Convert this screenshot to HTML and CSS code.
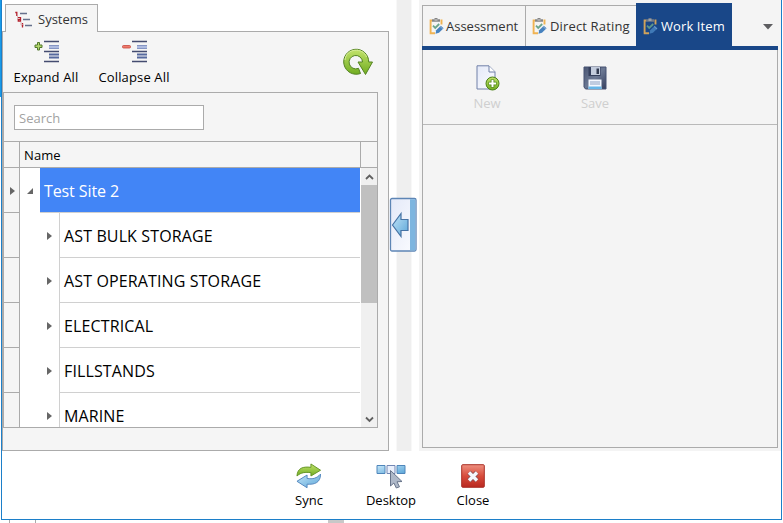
FILE: index.html
```
<!DOCTYPE html>
<html lang="en">
<head>
<meta charset="utf-8">
<title>Systems</title>
<link rel="stylesheet" href="styles.css">
</head>
<body>
<svg width="0" height="0" class="defs">
<defs>
<linearGradient id="green" x1="0" y1="0" x2="0" y2="1"><stop offset="0" stop-color="#c3e36c"/><stop offset="1" stop-color="#70ac20"/></linearGradient>
<linearGradient id="blue" x1="0" y1="0" x2="1" y2="1"><stop offset="0" stop-color="#c4e5f8"/><stop offset="1" stop-color="#5ba6d8"/></linearGradient>
<linearGradient id="red" x1="0" y1="0" x2="0" y2="1"><stop offset="0" stop-color="#ee9080"/><stop offset=".5" stop-color="#d84c3c"/><stop offset="1" stop-color="#b92820"/></linearGradient>
<linearGradient id="navy" x1="0" y1="0" x2="1" y2="1"><stop offset="0" stop-color="#4a5673"/><stop offset=".5" stop-color="#6b7893"/><stop offset="1" stop-color="#353e5c"/></linearGradient>
<linearGradient id="paper" x1="0" y1="0" x2="1" y2="1"><stop offset="0" stop-color="#e4e9f8"/><stop offset="1" stop-color="#fbfcff"/></linearGradient>
<symbol id="clip" viewBox="0 0 16 18"><path d="M3 3.500H1.600v12.700H6M11.500 3.500h1v4" fill="none" stroke="#f0b352" stroke-width="1.900"/><path d="M3 2.200h2.500V1h3v1.200H11v2.500H3z" fill="#858585"/><path d="M5.500 2.500h3v1h-3z" fill="#d8d8d8"/><path d="M4 8.700l2.200 2.200L10.200 7" fill="none" stroke="#6ba58b" stroke-width="1.800"/><path d="M7.200 13.200l4.600-4.500 2.800 2.600-4.600 4.500-3.500.9z" fill="#4682bf"/><path d="M11 9.400l3 2.800" stroke="#a6c4e0" stroke-width=".7"/></symbol>
<symbol id="list" viewBox="0 0 15 23"><path d="M0 1.500h15M0 11.500h15M0 21.500h15" stroke="#444c70" stroke-width="1.600"/><path d="M5 5h10v4H5z" fill="#aebbe0"/><path d="M5 5.500h10M5 8.500h10" stroke="#8595c4"/><path d="M5 14.500h10M5 17.500h10" stroke="#56699e" stroke-width="1.800"/></symbol>
</defs>
</svg>
<div class="window">
  <div class="main">
    <section class="left">
      <div class="lefttab"><svg class="treeicon" width="17" height="17" viewBox="0 0 17 17"><path d="M2.500 5v3.500M6 11v3h3" fill="none" stroke="#d9b5b8"/><path d="M5 2.500h7M8 8.500h7M10 14.500h7" stroke="#66718c" stroke-width="1.500"/><path d="M.3 1.500h1.500V5M3 6.700h2.500v3.500H3.300V8.600h2M7.500 12v1M7.500 13.500v3" stroke="#b3202c" stroke-width="1.300" fill="none"/></svg><span>Systems</span></div>
      <div class="panel">
        <div class="tools">
          <div class="tool t1"><svg width="25" height="23" viewBox="0 0 25 23"><path d="M3.500 2.500h2v2.500H8v2.500H5.500V10h-2V7.500H1V5h2.500z" fill="#b2d66b" stroke="#51772c"/><use href="#list" x="10" width="15" height="23"/></svg><span class="lx">Expand All</span></div>
          <div class="tool t2"><svg width="25" height="23" viewBox="0 0 25 23"><rect x=".5" y="5.500" width="8" height="2.500" rx="1" fill="#ef7b6c" stroke="#c5483e" stroke-width=".8"/><use href="#list" x="10" width="15" height="23"/></svg><span class="lc">Collapse All</span></div>
          <svg class="refresh" width="32" height="28" viewBox="0 0 32 28"><path d="M18.500 25.500A12.500 12.500 0 1 1 26.700 14h3.800L23.500 26.500 16 14h4.500a6.700 6.700 0 1 0-4 6.300z" fill="url(#green)" stroke="#548323"/><path d="M3 12C4 0 21-1 24.500 9" fill="none" stroke="#d5ec96" stroke-width="1"/></svg>
        </div>
        <div class="treebox">
          <div class="searchrow"><div class="search">Search</div></div>
          <div class="head"><i></i><span class="name">Name</span><b></b></div>
          <div class="body">
            <div class="rows">
              <div class="row sel"><div class="ind"><svg width="5" height="8"><path d="M0 0l5 4-5 4z"/></svg></div><div class="exp"><svg width="6" height="6"><path d="M6 0v6H0z"/></svg></div><div class="cell"><span>Test Site 2</span></div></div>
              <div class="row child"><div class="ind"></div><div class="exp"><svg width="5" height="8"><path d="M0 0l5 4-5 4z"/></svg></div><div class="cell"><span>AST BULK STORAGE</span></div></div>
              <div class="row child"><div class="ind"></div><div class="exp"><svg width="5" height="8"><path d="M0 0l5 4-5 4z"/></svg></div><div class="cell"><span>AST OPERATING STORAGE</span></div></div>
              <div class="row child"><div class="ind"></div><div class="exp"><svg width="5" height="8"><path d="M0 0l5 4-5 4z"/></svg></div><div class="cell"><span>ELECTRICAL</span></div></div>
              <div class="row child"><div class="ind"></div><div class="exp"><svg width="5" height="8"><path d="M0 0l5 4-5 4z"/></svg></div><div class="cell"><span>FILLSTANDS</span></div></div>
              <div class="row child"><div class="ind"></div><div class="exp"><svg width="5" height="8"><path d="M0 0l5 4-5 4z"/></svg></div><div class="cell"><span>MARINE</span></div></div>
            </div>
            <div class="scroll"><svg width="16" height="17"><path d="M5 11l3.500-3.500L12 11" /></svg><div class="thumb"></div><svg class="down" width="16" height="17"><path d="M5 7.500L8.500 11 12 7.500"/></svg></div>
          </div>
        </div>
      </div>
    </section>
    <div class="splitter"><div class="track"></div>
      <svg class="handle" width="29" height="56" viewBox="0 0 29 56"><rect x="1.500" y="1.500" width="25.500" height="52.500" rx="1.500" fill="url(#paper)" stroke="#5d85b5" stroke-width="1.300"/><path d="M21 2.200h5.300v51.200H21z" fill="#7db5df"/><path d="M3.500 28L12 16.500v6h7v11h-7v6z" fill="url(#blue)" stroke="#4673a5" stroke-width="1.200"/></svg>
    </div>
    <section class="right">
      <nav class="tabs">
        <div class="tab a"><svg width="16" height="18"><use href="#clip"/></svg><span>Assessment</span></div>
        <div class="tab d"><svg width="16" height="18"><use href="#clip"/></svg><span>Direct Rating</span></div>
        <div class="tab w"><svg width="16" height="18"><use href="#clip"/></svg><span>Work Item</span></div>
        <svg class="drop" width="10" height="6"><path d="M0 0h10L5 5.500z" fill="#5d5d60"/></svg>
      </nav>
      <div class="work">
        <div class="worktools">
          <div class="tool new"><svg width="25" height="26" viewBox="0 0 25 26"><path d="M2 .8h12l6 6V24H2z" fill="url(#paper)" stroke="#7180a8"/><path d="M14 1v6h6" fill="#fff" stroke="#7180a8"/><circle cx="17.500" cy="18.500" r="6.500" fill="url(#green)" stroke="#4c8218"/><path d="M17.500 14.500v8M13.500 18.500h8" stroke="#4c8218" stroke-width="3.600"/><path d="M17.500 15v7M14 18.500h7" stroke="#fff" stroke-width="2"/></svg><span>New</span></div>
          <div class="tool save"><svg width="24" height="24" viewBox="0 0 24 24"><path d="M1 1h22v22H2.500L1 21z" fill="url(#navy)" stroke="#465272"/><path d="M5.500 1h12v9h-12z" fill="#343f5c"/><path d="M8 1h9v8H8z" fill="#c2cbdc"/><path d="M13.500 2.500h2.500V8h-2.500z" fill="#30394f"/><path d="M5.500 13.500h13V23h-13z" fill="#f4f8ff"/><path d="M7 16h10M7 18h10" stroke="#8aa0c2"/><path d="M5.500 20.500h13V23h-13z" fill="#66b6e8"/></svg><span>Save</span></div>
        </div>
      </div>
    </section>
  </div>
  <footer>
    <div class="tool sync"><svg width="28" height="27" viewBox="0 0 28 27"><path d="M1.500 13.500C2 5 8 3.500 16 4.500V1l10 6.500-10 6V10C10 9.500 6 9.500 1.500 13.500z" fill="url(#green)" stroke="#649427"/><path d="M26 11.500C26 21 19 22.500 12 22v3.700L1.500 19 12 12.500V16c6 1 10 0 14-4.500z" fill="url(#blue)" stroke="#5185bd"/></svg><span>Sync</span></div>
    <div class="tool desk"><svg width="30" height="26" viewBox="0 0 30 26"><path d="M1 2.500h8v8H1zM21 2.500h8v8h-8z" fill="url(#blue)" stroke="#4f86bb"/><path d="M11 2.500h8v8h-8z" fill="#eaf0fc" stroke="#7387b5"/><path d="M14.500 7.500L26 18.500l-5 .3 2.500 5-3.200 1.200-2.400-5-3.400 3z" fill="#aeb8c8" stroke="#68748a"/></svg><span>Desktop</span></div>
    <div class="tool close"><svg width="24" height="24" viewBox="0 0 24 24"><rect x=".7" y=".7" width="22.600" height="22.600" rx="1" fill="url(#red)" stroke="#a93027"/><path d="M8 8.500l8 8M16 8.500l-8 8" stroke="#8e5055" stroke-width="5"/><path d="M8 8.500l8 8M16 8.500l-8 8" stroke="#f5f7fd" stroke-width="3.300"/></svg><span>Close</span></div>
  </footer>
</div>
<div class="under"><i></i><i></i><b></b></div>
</body>
</html>
```
FILE: styles.css
```
* { box-sizing: border-box; }
body { margin: 0; width: 783px; height: 523px; overflow: hidden; background: #fff; font: 13px/18px "Open Sans", "Noto Sans", sans-serif; color: #000; }
svg { display: block; flex: none; }
.defs { position: absolute; }
span { white-space: nowrap; }
.window { width: 781px; height: 520px; margin-left: 1px; border: solid #1c7fc9; border-width: 0 1px 1px; box-shadow: -1px -423px 0 #199be8; background: #fff; }
.main { display: flex; height: 451px; }
.left { width: 387px; padding-top: 4px; }
.lefttab { width: 93px; height: 28px; margin: 0 0 -1px 3px; border: 1px solid #ababab; border-bottom: 0; background: #f5f5f5; position: relative; z-index: 1; display: flex; align-items: center; color: #333; padding: 1px 0 0 9px; }
.lefttab span { margin-left: 6px; letter-spacing: 0; }
.panel { height: 420px; background: #f5f5f5; border: 1px solid #ababab; }
.tools { height: 60px; display: flex; position: relative; }
.tool { display: flex; flex-direction: column; align-items: center; }
.tool span { letter-spacing: 0; }
.t1 { width: 86px; padding-top: 8px; }
.t2 { width: 90px; padding-top: 8px; }
.tools .tool span { margin-top: 5px; letter-spacing: .15px; }
.refresh { margin: 16px 0 0 163px; }
.treebox { width: 375px; height: 336px; border: 1px solid #ababab; background: #f5f5f5; }
.searchrow { height: 48px; padding: 12px 0 0 10px; }
.search { width: 190px; height: 25px; border: 1px solid #ababab; background: #fff; padding: 3px 4px; color: #a2a2a2; letter-spacing: 0; }
.head { height: 27px; border: solid #ababab; border-width: 1px 0; display: flex; }
.head i { width: 16px; border-right: 1px solid #ababab; }
.head .name { flex: 1; padding: 4px 0 0 4px; letter-spacing: .1px; }
.head b { width: 17px; border-left: 1px solid #ababab; }
.body { display: flex; height: 259px; overflow: hidden; background: #fff; }
.rows { width: 356px; }
.row { display: flex; height: 45px; }
.ind { width: 16px; background: #f5f5f5; border: solid #ababab; border-width: 0 1px 1px 0; display: flex; align-items: center; padding: 2px 0 0 6px; }
.exp { width: 20px; display: flex; align-items: center; padding: 0 0 0 7px; }
.row svg { fill: #666; }
.child .exp { width: 40px; padding: 1px 0 0 28px; border-right: 1px solid #d0d0d0; }
.child .exp svg { margin-left: -1px; }
.cell { flex: 1; border-bottom: 1px solid #d0d0d0; padding-left: 4px; font-size: 16px; line-height: 47px; height: 45px; letter-spacing: .13px; }
.sel .cell { background: #4285f6; color: #fff; letter-spacing: -.1px; }
.scroll { width: 17px; background: #f0f0f0; display: flex; flex-direction: column; align-items: flex-end; border-left: 1px solid #fff; }
.scroll path { fill: none; stroke: #606060; stroke-width: 1.8; }
.thumb { width: 16px; height: 118px; background: #c0c0c0; }
.down { margin-top: auto; }
.splitter { width: 30px; position: relative; padding-left: 7px; }
.track { width: 16px; height: 451px; background: #efefef; border: solid #f8f8f8; border-width: 0 1px; }
.handle { position: absolute; left: 0; top: 197px; }
.right { width: 362px; background: #f4f4f4; padding: 3px; }
.tabs { height: 47px; border-bottom: 4px solid #194788; display: flex; width: 356px; align-items: flex-end; }
.tab { height: 41px; border: solid #ababab; border-width: 1px 0 0 1px; display: flex; align-items: center; padding: 0 0 1px 6px; color: #333; letter-spacing: 0; }
.tab span { margin-left: 2px; }
.a { width: 103px; }
.a span { margin-left: 1px; }
.d { width: 111px; letter-spacing: .15px; }
.w { width: 96px; height: 43px; background: #194788; border: 0; color: #fff; padding: 3px 0 0 7px; letter-spacing: .1px; }
.w svg { opacity: .85; }
.drop { margin: 0 0 16px 31px; }
.work { height: 398px; width: 356px; border: 1px solid #ababab; border-top: 0; }
.worktools { height: 75px; border-bottom: 1px solid #b9b9b9; display: flex; color: #cfcfcf; }
.new { width: 128px; padding-top: 15px; }
.save { width: 88px; padding-top: 16px; }
.new span { margin-top: 3px; }
.save span { margin-top: 4px; }
footer { height: 68px; display: flex; padding-left: 266px; }
footer .tool { width: 82px; padding-top: 12px; }
footer .tool svg { height: 26px; }
footer .tool span { margin-top: 2px; }
.under { display: flex; height: 3px; padding-left: 9px; }
.under i { width: 26px; border-left: 1px solid #aaa; }
.under b { width: 16px; margin-left: 267px; background: #c8c8c8; }
```
